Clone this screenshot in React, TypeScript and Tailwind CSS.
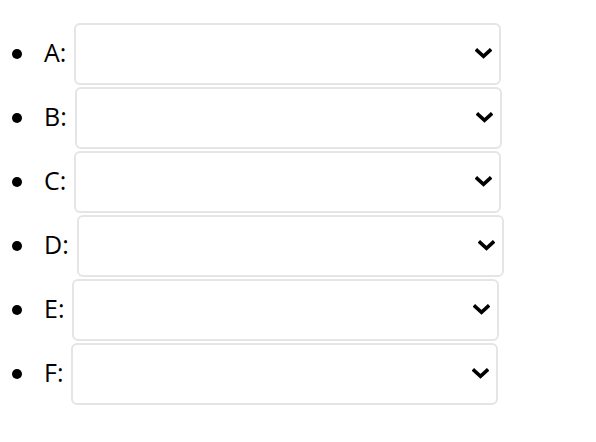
const items = ["A", "B", "C", "D", "E", "F"];

function Chevron() {
  return (
    <svg
      className="pointer-events-none absolute right-[9px] top-[25px]"
      width="17"
      height="11"
      viewBox="0 0 17 11"
      fill="none"
    >
      <path d="M2.2 2.5 L8.5 8.3 L14.8 2.5" stroke="black" strokeWidth="3.6" strokeLinecap="square" />
    </svg>
  );
}

export default function App() {
  return (
    <div className="min-h-screen bg-white pt-[22px] font-['Open_Sans',sans-serif] text-[25px] text-black">
      <ul className="flex flex-col">
        {items.map((k) => (
          <li key={k} className="flex h-[64px] items-center">
            <span className="ml-[12px] h-[10px] w-[10px] rounded-full bg-black" />
            <span className="ml-[22px] -translate-y-[1px]">{k}:</span>
            <div className="relative ml-[8px] h-[62px] w-[427px]">
              <select className="h-full w-full appearance-none rounded-md border-2 border-[#e5e5e5] bg-white" />
              <Chevron />
            </div>
          </li>
        ))}
      </ul>
    </div>
  );
}
